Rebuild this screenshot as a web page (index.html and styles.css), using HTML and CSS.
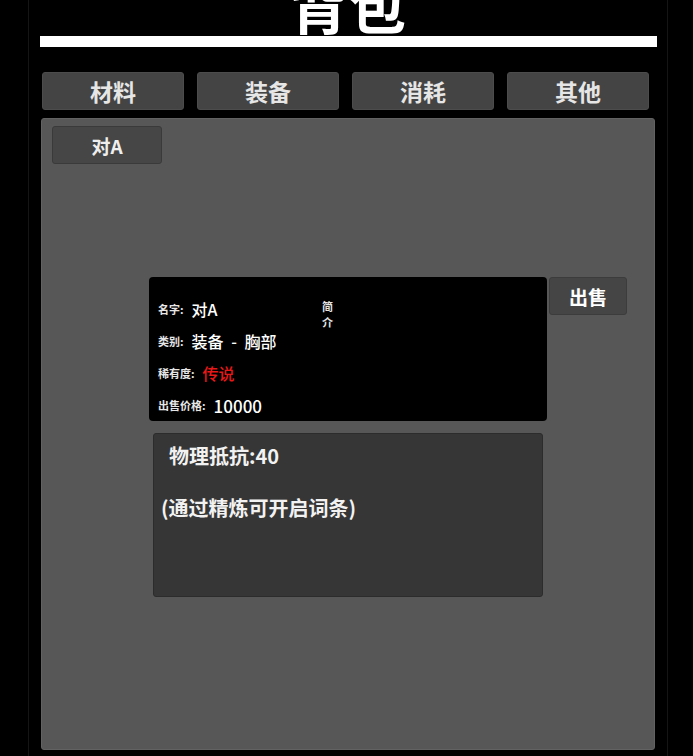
FILE: index.html
```html
<!DOCTYPE html>
<html lang="zh">
<head>
<meta charset="utf-8">
<title>背包</title>
<link rel="stylesheet" href="styles.css">
</head>
<body>
<div class="frame">
  <h1 class="title">背包</h1>
  <div class="title-bar"></div>
  <nav class="tabs">
    <div class="tab">材料</div>
    <div class="tab">装备</div>
    <div class="tab">消耗</div>
    <div class="tab">其他</div>
  </nav>
  <section class="panel">
    <div class="item-btn">对A</div>
    <div class="detail-row">
      <div class="info">
        <div class="info-fields">
          <div class="field"><span class="label">名字:</span><span class="value">对A</span></div>
          <div class="field"><span class="label">类别:</span><span class="value spaced">装备 - 胸部</span></div>
          <div class="field"><span class="label">稀有度:</span><span class="value rare">传说</span></div>
          <div class="field"><span class="label">出售价格:</span><span class="value price">10000</span></div>
        </div>
        <div class="intro">简<br>介</div>
      </div>
      <div class="sell-btn">出售</div>
    </div>
    <div class="stats">
      <div class="stat-main">物理抵抗:40</div>
      <div class="stat-note">(通过精炼可开启词条)</div>
    </div>
  </section>
</div>
</body>
</html>
```

FILE: styles.css
```css
html, body {
  margin: 0;
  padding: 0;
  background: #000;
  overflow: hidden;
}

body {
  font-family: "Noto Sans CJK SC", "Noto Sans", sans-serif;
  color: #f2f2f2;
}

.frame {
  box-sizing: border-box;
  margin-left: 28px;
  width: 640px;
  height: 756px;
  border-left: 1px solid #151515;
  border-right: 1px solid #151515;
  display: flex;
  flex-direction: column;
}

.title {
  margin: -25px 0 3px 0;
  font-size: 58px;
  line-height: 58px;
  font-weight: 700;
  text-align: center;
  color: #fff;
  height: 58px;
  flex-shrink: 0;
}

.title-bar {
  height: 11px;
  margin: 0 10px 0 11px;
  background: #fff;
  flex-shrink: 0;
}

.tabs {
  display: flex;
  gap: 13px;
  margin-top: 25px;
  padding-left: 13px;
  flex-shrink: 0;
}

.tab {
  box-sizing: border-box;
  width: 142px;
  height: 38px;
  background: #444;
  border: 1px solid #4c4c4c;
  border-radius: 3px;
  color: #e6e6e6;
  font-size: 23px;
  font-weight: 700;
  display: flex;
  align-items: center;
  justify-content: center;
}

.panel {
  box-sizing: border-box;
  margin: 8px 0 0 12px;
  width: 614px;
  height: 632px;
  flex-shrink: 0;
  background: #575757;
  border: 1px solid #626262;
  border-radius: 3px;
  padding: 7px 10px;
}

.item-btn {
  box-sizing: border-box;
  width: 110px;
  height: 38px;
  background: #464646;
  border: 1px solid #3a3a3a;
  border-radius: 3px;
  font-size: 19px;
  font-weight: 700;
  color: #eee;
  display: flex;
  align-items: center;
  justify-content: center;
}

.detail-row {
  display: flex;
  align-items: flex-start;
  gap: 2px;
  margin: 113px 0 0 97px;
}

.info {
  box-sizing: border-box;
  width: 398px;
  height: 144px;
  background: #000;
  border-radius: 4px;
  display: flex;
  padding: 16px 0 0 9px;
}

.info-fields {
  width: 164px;
  display: flex;
  flex-direction: column;
}

.field {
  height: 32px;
  flex-shrink: 0;
  display: flex;
  align-items: center;
  gap: 8px;
  white-space: nowrap;
}

.label {
  font-size: 11px;
  font-weight: 700;
  color: #e6e6e6;
}

.value {
  font-size: 16px;
  font-weight: 500;
  color: #fff;
}

.value.spaced {
  word-spacing: 4px;
}

.value.rare {
  color: #e81818;
}

.value.price {
  font-size: 17px;
}

.intro {
  font-size: 11px;
  font-weight: 700;
  line-height: 16px;
  color: #e6e6e6;
  margin-top: 5px;
}

.sell-btn {
  box-sizing: border-box;
  width: 78px;
  height: 38px;
  background: #454545;
  border: 1px solid #3c3c3c;
  border-radius: 3px;
  font-size: 19px;
  font-weight: 700;
  color: #fff;
  display: flex;
  align-items: center;
  justify-content: center;
}

.stats {
  box-sizing: border-box;
  width: 390px;
  height: 164px;
  margin: 12px 0 0 101px;
  background: #363636;
  border: 1px solid #2c2c2c;
  border-radius: 3px;
  padding: 7px 0 0 7px;
}

.stat-main {
  margin-left: 8px;
  font-size: 20px;
  line-height: 30px;
  font-weight: 700;
  color: #f2f2f2;
}

.stat-note {
  margin-top: 22px;
  font-size: 20px;
  line-height: 30px;
  font-weight: 700;
  color: #f2f2f2;
}
```
